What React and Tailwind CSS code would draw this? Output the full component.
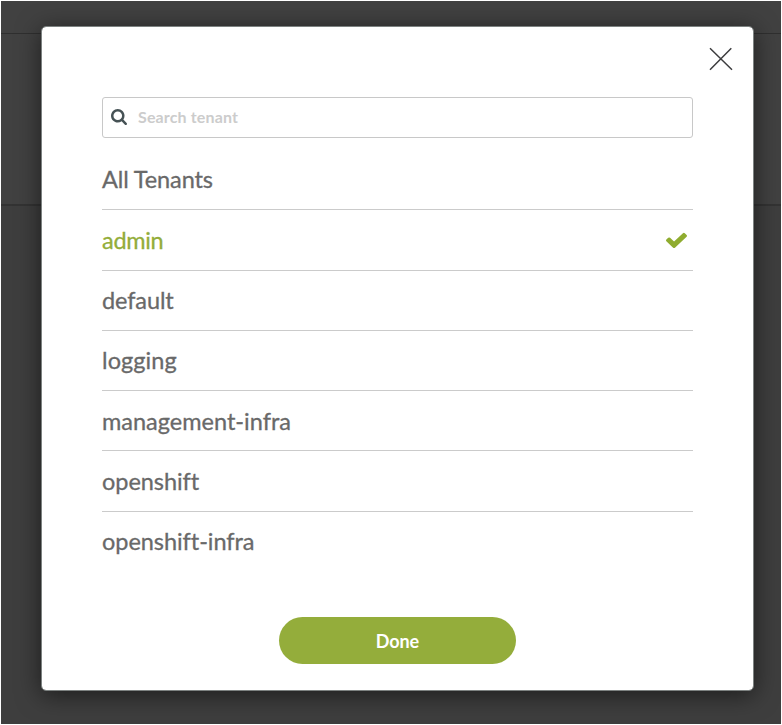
const tenants = [
  { name: 'All Tenants', tracking: 'tracking-[-0.1px]' },
  { name: 'admin', tracking: 'tracking-[-0.3px]', selected: true },
  { name: 'default', tracking: 'tracking-[-0.1px]' },
  { name: 'logging', tracking: 'tracking-[0.1px]' },
  { name: 'management-infra', tracking: 'tracking-[0px]' },
  { name: 'openshift', tracking: 'tracking-[-0.05px]' },
  { name: 'openshift-infra', tracking: 'tracking-[-0.05px]' },
];

function SearchIcon() {
  return (
    <svg viewBox="0 0 1664 1664" className="-mt-[2px] h-[16px] w-[16px] shrink-0 fill-[#465255]">
      <path d="M1152 704q0-185-131.5-316.5t-316.5-131.5-316.5 131.5-131.5 316.5 131.5 316.5 316.5 131.5 316.5-131.5 131.5-316.5zm512 832q0 52-38 90t-90 38q-54 0-90-38l-343-342q-179 124-399 124-143 0-273.5-55.5t-225-150-150-225-55.5-273.5 55.5-273.5 150-225 225-150 273.5-55.5 273.5 55.5 225 150 150 225 55.5 273.5q0 220-124 399l343 343q37 37 37 90z" />
    </svg>
  );
}

function CheckIcon() {
  return (
    <svg viewBox="121 270 1550 1252" preserveAspectRatio="none" className="mr-[6px] h-[16px] w-[21px] fill-[#8fac2f]">
      <path d="M1671 566q0 40-28 68l-724 724-136 136q-28 28-68 28t-68-28l-136-136-362-362q-28-28-28-68t28-68l136-136q28-28 68-28t68 28l294 295 656-657q28-28 68-28t68 28l136 136q28 28 28 68z" />
    </svg>
  );
}

function CloseIcon() {
  return (
    <svg viewBox="0 0 24 24" className="h-[24px] w-[24px]" fill="none" stroke="#3c3c3e" strokeWidth="1.5">
      <path d="M1 1.3 23 22.7M22.3 1.3 1 22.7" />
    </svg>
  );
}

function TenantRow({ name, tracking, selected }) {
  return (
    <li
      className={`flex h-[60.3px] items-center justify-between border-b border-[#cbcbcb] text-[23.5px] leading-none last:border-transparent [-webkit-text-stroke:0.3px] ${tracking} ${selected ? 'text-[#93ad3a]' : 'text-[#696969]'}`}
    >
      <span className="pt-px">{name}</span>
      {selected && <CheckIcon />}
    </li>
  );
}

export default function App() {
  return (
    <div className="h-[725px] w-[782px] overflow-hidden bg-white p-px font-['Lato','Open_Sans',sans-serif]">
      <div className="relative h-[723px] overflow-hidden bg-[#3e3e3e]">
        <div className="h-[33px] border-b border-[#2f2f2f] bg-[#414141]" />
        <div className="h-[172px] border-b-2 border-[#333333] bg-[#414141]" />
        <div className="absolute top-[25px] left-[40px] flex h-[665px] w-[713px] flex-col rounded-[5px] border border-[#7d8281] bg-white bg-clip-padding pr-[60px] pl-[60px] shadow-[0_4px_24px_rgba(0,0,0,0.55)]">
          <div className="-mr-[40px] flex h-[70px] justify-end pt-[20px]">
            <button className="h-[24px]">
              <CloseIcon />
            </button>
          </div>
          <label className="flex h-[41px] shrink-0 items-center gap-[11px] rounded-[3px] border border-[#c8c8c8] px-[8px]">
            <SearchIcon />
            <span className="-mt-[2px] text-[16px] leading-none font-bold tracking-[0.15px] text-[#cccccc]">Search tenant</span>
          </label>
          <ul className="mt-[12px] shrink-0">
            {tenants.map((t) => (
              <TenantRow key={t.name} {...t} />
            ))}
          </ul>
          <button className="mt-[45px] flex h-[47px] w-[237px] shrink-0 items-center justify-center self-center rounded-full bg-[#94ad3b] text-[18px] leading-none font-bold tracking-[-0.1px] text-white">
            Done
          </button>
        </div>
      </div>
    </div>
  );
}
